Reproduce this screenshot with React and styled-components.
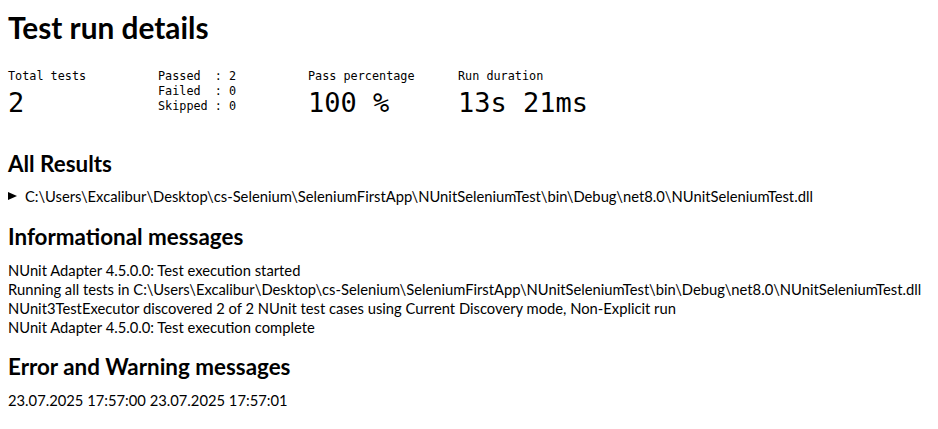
import styled, { createGlobalStyle } from "styled-components";

const GlobalStyle = createGlobalStyle`
  html, body {
    margin: 0;
    padding: 0;
    background: #ffffff;
  }
  body {
    color: #000000;
    font-family: Lato, "Open Sans", sans-serif;
    font-size: 14.75px;
  }
`;

const stats = [
  { label: "Pass percentage", value: "100 %" },
  { label: "Run duration", value: "13s 21ms" },
];

const counts = [
  ["Passed ", "2"],
  ["Failed ", "0"],
  ["Skipped", "0"],
];

const messages = [
  "NUnit Adapter 4.5.0.0: Test execution started",
  "Running all tests in C:\\Users\\Excalibur\\Desktop\\cs-Selenium\\SeleniumFirstApp\\NUnitSeleniumTest\\bin\\Debug\\net8.0\\NUnitSeleniumTest.dll",
  "NUnit3TestExecutor discovered 2 of 2 NUnit test cases using Current Discovery mode, Non-Explicit run",
  "NUnit Adapter 4.5.0.0: Test execution complete",
];

const App = () => {
  return <Page>
    <GlobalStyle />
    <Title>Test run details</Title>

    <StatsRow>
      <Stat>
        <StatLabel>Total tests</StatLabel>
        <StatValue>2</StatValue>
      </Stat>
      <Stat>
        {counts.map(([name, n]) => (
          <CountLine key={name}>{name} : {n}</CountLine>
        ))}
      </Stat>
      {stats.map((s) => (
        <Stat key={s.label}>
          <StatLabel>{s.label}</StatLabel>
          <StatValue>{s.value}</StatValue>
        </Stat>
      ))}
    </StatsRow>

    <Heading $top={32}>All Results</Heading>
    <Results open={false}>
      <Summary>C:\Users\Excalibur\Desktop\cs-Selenium\SeleniumFirstApp\NUnitSeleniumTest\bin\Debug\net8.0\NUnitSeleniumTest.dll</Summary>
    </Results>

    <Heading $top={17}>Informational messages</Heading>
    <MessageList>
      {messages.map((m) => <Line key={m}>{m}</Line>)}
    </MessageList>

    <Heading $top={16}>Error and Warning messages</Heading>
    <MessageList>
      <Line>23.07.2025 17:57:00 23.07.2025 17:57:01</Line>
    </MessageList>
  </Page>
}

export default App

const Page = styled.div`
  padding: 8px 8px 0 8px;
`

const Title = styled.h1`
  margin: 0;
  font-size: 29.8px;
  font-weight: 700;
  line-height: 40px;
`

const StatsRow = styled.div`
  display: grid;
  grid-template-columns: repeat(4, 150px);
  margin-top: 21px;
  font-family: "DejaVu Sans Mono", "Liberation Mono", monospace;
`

const Stat = styled.div`
  display: flex;
  flex-direction: column;
`

const StatLabel = styled.div`
  font-size: 11.8px;
  line-height: 15px;
`

const CountLine = styled.div`
  font-size: 11.8px;
  line-height: 15px;
  white-space: pre;
`

const StatValue = styled.div`
  margin-top: 3.5px;
  font-size: 27px;
  line-height: 30px;
`

const Heading = styled.h2`
  margin: ${(p) => p.$top}px 0 0 0;
  font-size: 22.4px;
  font-weight: 700;
  line-height: 28px;
`

const Results = styled.details`
  margin-top: 9px;
`

const Summary = styled.summary`
  list-style: none;
  display: flex;
  align-items: center;
  gap: 8px;
  line-height: 19px;
  cursor: pointer;

  &::-webkit-details-marker {
    display: none;
  }

  &::before {
    content: "";
    width: 0;
    height: 0;
    border-top: 4.5px solid transparent;
    border-bottom: 4.5px solid transparent;
    border-left: 9px solid #000000;
  }
`

const MessageList = styled.div`
  margin-top: 10px;
`

const Line = styled.div`
  line-height: 19px;
`
